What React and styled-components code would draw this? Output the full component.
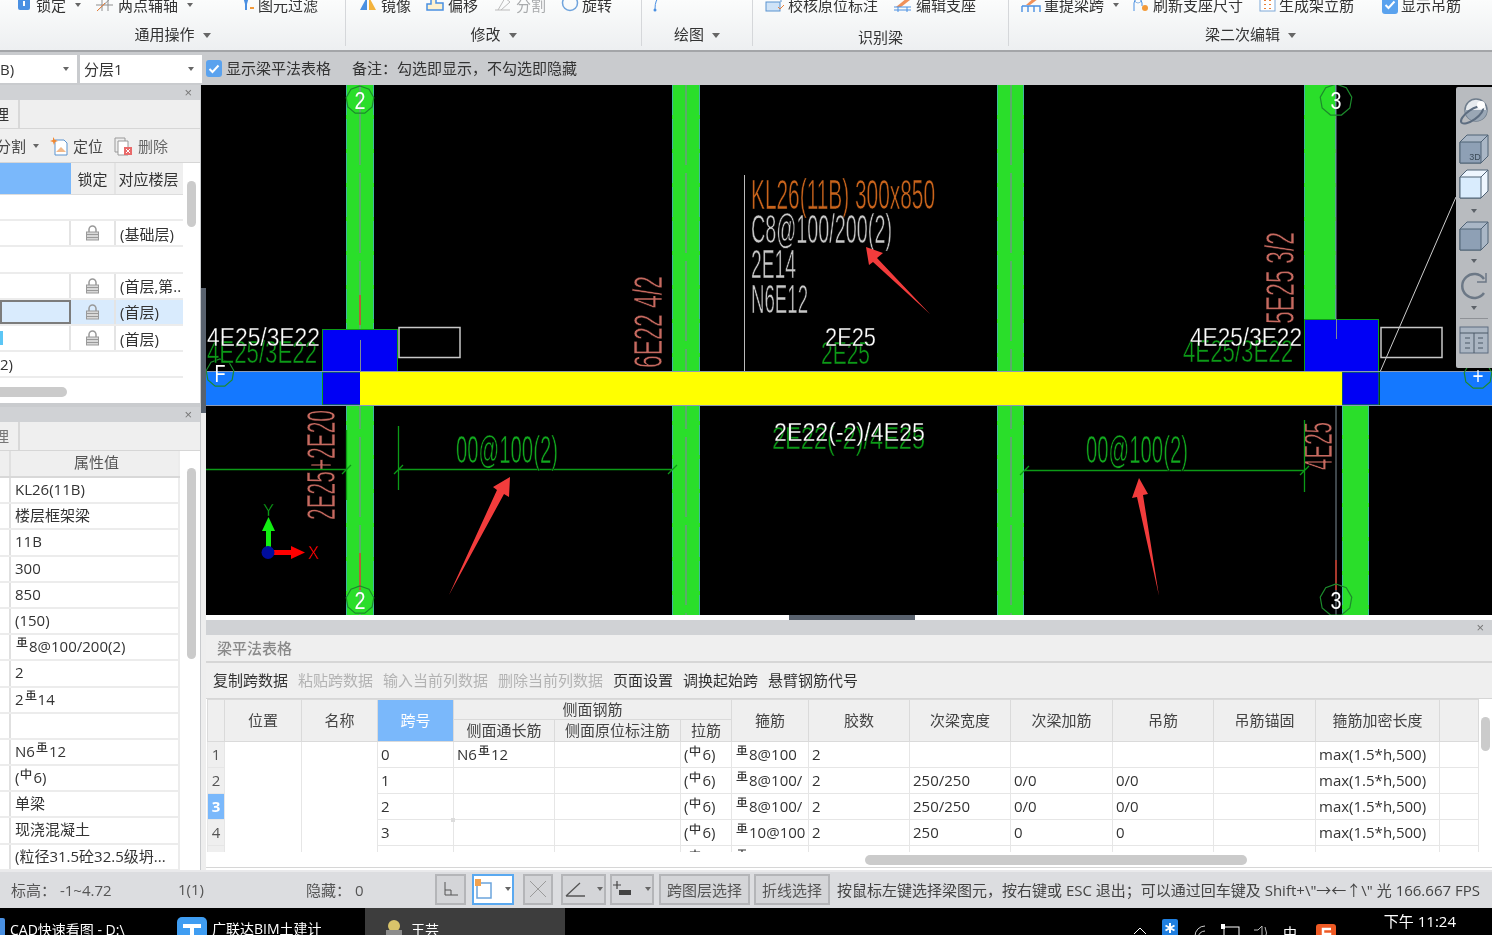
import React from "react";
import styled, { createGlobalStyle } from "styled-components";

const Global = createGlobalStyle`
  html, body { margin: 0; padding: 0; background: #000; }
  * { box-sizing: border-box; }
  body { font-family: "Open Sans", "Noto Sans CJK SC", sans-serif; font-size: 15px; color: #333; }
`;

const Win = styled.div`
  width: 1492px; height: 935px; display: flex; flex-direction: column; overflow: hidden;
  filter: blur(0.4px);
`;

/* ---------- ribbon ---------- */
const Ribbon = styled.div`
  height: 52px; flex: none; display: flex; overflow: hidden;
  background: linear-gradient(#fbfcfc, #edeff1);
  border-bottom: 2px solid #a3a5a8;
`;
const Group = styled.div`
  width: ${p => p.$w}px; flex: ${p => (p.$w ? "none" : 1)}; display: flex; flex-direction: column;
  border-right: ${p => (p.$last ? "none" : "1px solid #d5d7da")}; height: 46px;
`;
const ToolRow = styled.div`
  height: 14px; margin-top: -2px; padding-left: ${p => p.$pad}px; display: flex; align-items: center; overflow: visible;
`;
const Tool = styled.div`
  width: ${p => p.$w}px; flex: none; display: flex; align-items: center; gap: 3px; white-space: nowrap;
  color: ${p => (p.$off ? "#a9abad" : "#333")}; line-height: 14px;
`;
const Caret = styled.i`
  display: inline-block; width: 0; height: 0; margin-left: ${p => p.$ml || 6}px; vertical-align: middle;
  border-left: 3px solid transparent; border-right: 3px solid transparent; border-top: 4px solid #666;
`;
const GroupLabel = styled.div`
  margin-top: ${p => p.$mt || 13}px; text-align: center; line-height: 18px;
  ${Caret} { border-left-width: 4px; border-right-width: 4px; border-top-width: 5px; margin-left: 8px; }
`;

const OptionBar = styled.div`
  height: 33px; flex: none; background: #c9cbce; display: flex; align-items: center;
`;
const Select = styled.div`
  width: ${p => p.$w}px; height: 28px; margin-right: ${p => p.$mr}px; background: #fff; display: flex; align-items: center;
  justify-content: space-between; padding: 0 8px 0 ${p => p.$pl}px; flex: none;
`;
const Check = styled.span`
  width: 16px; height: 17px; border-radius: 3px; background: #5aa2ee; flex: none; display: inline-flex;
  align-items: center; justify-content: center;
`;
const OptionText = styled.span`
  margin-left: ${p => p.$ml}px; margin-top: -3px; white-space: nowrap;
`;

/* ---------- body ---------- */
const Body = styled.div`
  height: 785px; flex: none; display: flex;
`;
const LeftCol = styled.div`
  width: 201px; flex: none; background: #c9cbce; display: flex; flex-direction: column; gap: 4px;
`;
const Splitter = styled.div`
  width: 5px; flex: none; background: #eeeeee; display: flex; flex-direction: column;
`;
const SplitTop = styled.div`
  height: 203px; background: #000;
`;
const SplitHandle = styled.div`
  height: 125px; background: #59626e;
`;
const RightCol = styled.div`
  flex: 1; min-width: 0; display: flex; flex-direction: column; background: #fff;
`;
const Panel = styled.div`
  height: ${p => p.$h}px; flex: none; background: #fff; display: flex; flex-direction: column; position: relative; overflow: hidden;
  border-right: 1px solid #c9cbce;
`;
const PanelHead = styled.div`
  height: 15px; flex: none; background: #d0d2d5; display: flex; align-items: center; justify-content: flex-end; padding-right: 8px;
  color: #777; font: 13px/15px "Liberation Sans", sans-serif;
`;
const TabRow = styled.div`
  height: 29px; flex: none; background: #efefef; display: flex; border-bottom: 1px solid #d6d6d6;
`;
const Tab = styled.div`
  width: 20px; background: #efefef; border-right: 2px solid #d8d8d8; line-height: 28px; overflow: hidden; white-space: nowrap;
  text-indent: -21px; color: ${p => (p.$dim ? "#777" : "#333")};
`;
const PanelTools = styled.div`
  height: 34px; flex: none; background: #efefef; display: flex; align-items: center; border-bottom: 1px solid #d6d6d6; white-space: nowrap;
`;
const PTool = styled.span`
  display: inline-flex; align-items: center; gap: 4px; margin-left: ${p => p.$ml || 0}px; color: ${p => p.$c || "#444"};
`;
const FloorHead = styled.div`
  height: 32px; flex: none; display: flex; width: 183px; background: #efefef; border-bottom: 1px solid #ddd;
`;
const FloorRow = styled.div`
  height: 26.2px; flex: none; display: flex; width: 183px; border-bottom: 2px solid #ececec;
`;
const FloorCell = styled.div`
  width: ${p => p.$w}px; flex: none; display: flex; align-items: center; white-space: nowrap; overflow: hidden;
  justify-content: ${p => (p.$center ? "center" : "flex-start")}; padding-left: ${p => (p.$center ? 0 : 4)}px;
  border-right: 2px solid ${p => (p.$b ? p.$b : "#e4e4e4")};
  background: ${p => p.$bg || "transparent"}; color: ${p => p.$c || "#333"};
  outline: ${p => (p.$focus ? "2px solid #7c7c7c" : "none")}; outline-offset: -2px;
`;
const Track = styled.div`
  position: absolute; left: ${p => p.$x}px; top: ${p => p.$y}px; width: ${p => p.$w}px; height: ${p => p.$h}px;
  background: #cbcbcb; border-radius: 5px;
`;
const PropHead = styled.div`
  height: 27px; flex: none; display: flex; width: 180px; background: #efefef; border-bottom: 2px solid #d8d8d8;
`;
const PropRow = styled.div`
  height: 26.2px; flex: none; display: flex; width: 180px; border-bottom: 2px solid #ececec;
`;
const PropIdx = styled.div`
  width: 11px; flex: none; border-right: 2px solid #e0e0e0;
`;
const PropVal = styled.div`
  flex: 1; padding-left: 4px; line-height: 22px; white-space: nowrap; overflow: hidden; border-right: 2px solid #ececec;
  text-align: ${p => (p.$center ? "center" : "left")}; color: ${p => p.$c || "#333"};
`;

/* ---------- canvas ---------- */
const Canvas = styled.div`
  height: 530px; flex: none; background: #000; position: relative; overflow: hidden;
  svg.cad { display: block; }
  svg.cad text { font-family: "Liberation Sans", sans-serif; }
`;
const ViewBar = styled.div`
  position: absolute; right: 0; top: 2px; width: 36px; height: 281px; background: #b8bbbf; border-radius: 2px 0 0 2px;
  display: flex; flex-direction: column; align-items: center; padding-top: 6px;
`;
const ViewIcon = styled.div`
  height: ${p => p.$h}px; flex: none; display: flex; align-items: center; justify-content: center;
`;
const ViewCaret = styled(Caret)`
  margin: 0; border-top-color: #5c6168;
`;
const ViewRule = styled.div`
  width: 28px; height: 1px; background: #8e9196; margin: 3px 0 2px;
`;
const SplitBar = styled.div`
  height: 5px; flex: none; background: #fff; padding-left: 583px;
`;
const SplitGrip = styled.div`
  width: 126px; height: 5px; background: #59626e;
`;

/* ---------- beam table ---------- */
const TablePanel = styled.div`
  flex: 1; display: flex; flex-direction: column; background: #fff; position: relative;
`;
const TableTitle = styled.div`
  height: 28px; flex: none; background: #efefef; border-bottom: 2px solid #d6d6d6; color: #8a8a8a; padding-left: 11px; line-height: 26px; font-weight: 500;
`;
const TableTools = styled.div`
  height: 36px; flex: none; background: #efefef; border-bottom: 1px solid #d6d6d6; padding-left: 7px; padding-bottom: 2px; display: flex; gap: 10px; align-items: center;
`;
const TableTool = styled.span`
  color: ${p => (p.$off ? "#b3b3b3" : "#333")}; white-space: nowrap;
`;
const TableClip = styled.div`
  height: 153px; flex: none; overflow: hidden; padding-left: 1px; position: relative;
`;
const Grid = styled.table`
  width: 1271px; table-layout: fixed; border-collapse: collapse; font-size: 15px;
`;
const Th = styled.th`
  height: ${p => p.$h || 20}px; font-weight: 400; padding: 0 0 1px; white-space: nowrap; overflow: hidden; text-align: center;
  background: ${p => (p.$active ? "#7ab8fb" : "#efefef")}; color: ${p => (p.$active ? "#fff" : "#444")};
  border: 1.5px solid #dadada; line-height: 18px;
`;
const Td = styled.td`
  height: 26px; padding: 0 0 2px 3px; white-space: nowrap; overflow: hidden; border: 1.5px solid #e6e6e6; line-height: 22px; color: #333;
  background: #fff;
`;
const RowNo = styled(Td)`
  background: ${p => (p.$active ? "#7ab8fb" : "#efefef")}; color: ${p => (p.$active ? "#fff" : "#555")}; text-align: center; padding: 0 0 2px;
  font-weight: ${p => (p.$active ? 700 : 400)};
`;
const FocusMark = styled.span`
  position: absolute; left: 245px; top: 119px; width: 4px; height: 4px; background: #dcdcdc;
`;
const HScroll = styled.div`
  height: 16px; flex: none; background: #fff; border-bottom: 1px solid #d6d6d6; position: relative;
`;
const CloseX = styled.span`
  color: #777; font: 13px/15px "Liberation Sans", sans-serif;
`;

/* ---------- status + taskbar ---------- */
const Status = styled.div`
  height: 38px; flex: none; background: #dcdde0; display: flex; align-items: center; padding-left: 11px; padding-bottom: 2px; color: #555; white-space: nowrap; border-top: 2px solid #e9e9eb;
`;
const StatusText = styled.span`
  width: ${p => p.$w}px; flex: none; margin-left: ${p => p.$ml || 0}px; ${p => p.$c && `color: ${p.$c};`}
`;
const StatusBtn = styled.div`
  width: ${p => p.$w}px; height: 31px; margin-left: ${p => p.$ml}px; flex: none; display: flex; align-items: center; justify-content: center; gap: 6px;
  background: ${p => (p.$on ? "#fff" : "#d4d5d8")}; border: 2px solid ${p => (p.$on ? "#5aa9f0" : "#b4b5b8")}; color: #555;
`;
const Taskbar = styled.div`
  height: 27px; flex: none; background: #000; color: #fff; display: flex; overflow: hidden; position: relative; font-size: 14px;
`;
const TaskItem = styled.div`
  width: ${p => p.$w}px; flex: none; height: 27px; display: flex; gap: 5px; padding-top: ${p => p.$pt || 12}px; padding-left: ${p => p.$pl || 0}px;
  margin-left: ${p => p.$ml || 0}px; background: ${p => p.$bg || "transparent"}; white-space: nowrap; line-height: 20px;
  svg { margin-top: -2px; flex: none; }
`;
const Tray = styled.div`
  flex: 1; display: flex; align-items: flex-start; position: relative; padding-top: 11px;
`;
const TrayGlyph = styled.div`
  width: ${p => p.$w}px; margin-left: ${p => p.$ml}px; margin-top: ${p => p.$mt || 0}px; flex: none; line-height: 20px;
  svg { display: block; }
`;
const Clock = styled.div`
  position: absolute; right: 36px; top: 3px; font-size: 15px; line-height: 20px;
`;

/* ---------- rebar marks and icons ---------- */
const Steel = ({ kind }) => (
  <svg width="12" height="12" viewBox="0 0 12 12" style={{ verticalAlign: "3px", margin: "0 1px" }}>
    {kind === "E"
      ? <path d="M2 1h8M2.5 3.5h7v3.5h-7zM6 1v8.5M0.5 9.5h11" fill="none" stroke="#333" strokeWidth="1.2" />
      : <path d="M1.5 3h9v4.5h-9zM6 0.5v11" fill="none" stroke="#333" strokeWidth="1.2" />}
  </svg>
);
const Ic = ({ w = 18, h = 16, children, style }) => (
  <svg width={w} height={h} viewBox={`0 0 ${w} ${h}`} style={{ flex: "none", ...style }}>{children}</svg>
);
const Lock = () => (
  <Ic w={15} h={16}>
    <path d="M4 7V4.5a3.5 3.5 0 0 1 7 0V7" fill="none" stroke="#999" strokeWidth="1.5" />
    <rect x="1.5" y="7" width="12" height="8" fill="#d8d8d8" stroke="#999" />
    <path d="M2 9.5h11M2 12.5h11" stroke="#999" />
  </Ic>
);

const ribbonIcons = {
  lock: <Ic w={16}><rect x="1" y="0" width="12" height="13" rx="2" fill="#4a90e2" /><rect x="6" y="4" width="2" height="5" fill="#fff" /></Ic>,
  axis: <Ic w={19}><path d="M1 14L15 1M6 0v14M12 0v14M0 8h17" stroke="#8f8f8f" fill="none" /><path d="M1 14L9 6" stroke="#e8803a" /></Ic>,
  filter: <Ic w={15}><path d="M3 0h6L7 7v6H5V7z" fill="#4a90e2" /><rect x="10" y="10" width="4" height="2" fill="#f29a3a" /></Ic>,
  mirror: <Ic w={20}><path d="M9 0L2 13h7z" fill="#4a90e2" /><path d="M11 0l7 13h-7z" fill="#f3b33d" /></Ic>,
  offset: <Ic w={20}><path d="M6 1h5v5h7v7H2V7h4z" fill="#fdf1cf" stroke="#4a90e2" strokeWidth="1.5" /></Ic>,
  split: <Ic w={20}><path d="M2 13h15M5 13L12 1l5 4-9 8" stroke="#bbb" fill="none" /></Ic>,
  rotate: <Ic w={18}><circle cx="9" cy="6" r="7.5" fill="none" stroke="#6fa3dc" strokeWidth="1.5" /></Ic>,
  draw: <Ic w={10}><path d="M8 0Q3 2 3 12" stroke="#4a90e2" fill="none" /><circle cx="3" cy="13" r="1.5" fill="#4a90e2" /></Ic>,
  check: <Ic w={20}><rect x="1" y="5" width="14" height="9" fill="#cfe3f7" stroke="#5b93cf" /><path d="M6 0h10v5" fill="none" stroke="#5b93cf" /><path d="M13 10l2 2 4-4" stroke="#e8803a" fill="none" /></Ic>,
  seat: <Ic w={20}><path d="M3 10L14 1l3 2-9 7" fill="#f0915a" /><path d="M1 10h17M1 13h17M5 10v5M14 10v5" stroke="#4a90e2" fill="none" /></Ic>,
  span: <Ic w={20}><path d="M5 8L14 0l3 2-8 6" fill="#f0915a" /><path d="M1 9h18v6M1 9v6M7 9v6M13 9v6" stroke="#4a90e2" fill="none" strokeWidth="1.4" /></Ic>,
  refresh: <Ic w={19}><path d="M3 14V6a4 4 0 0 1 8 0v3" stroke="#4a90e2" fill="none" /><circle cx="7" cy="3" r="3" fill="none" stroke="#8fb8e6" /><circle cx="14" cy="11" r="3" fill="#f29a3a" /></Ic>,
  bars: <Ic w={17}><rect x="1" y="0" width="15" height="14" fill="#fff" stroke="#7fa9d8" /><path d="M6 3v1M11 3v1M6 7v1M11 7v1M6 11v1M11 11v1" stroke="#e8803a" strokeWidth="2" /></Ic>,
};

const CheckMark = () => (
  <svg width="12" height="10" viewBox="0 0 12 10"><path d="M1.5 5l3 3 6-6.5" fill="none" stroke="#fff" strokeWidth="2" /></svg>
);

/* ---------- cad drawing ---------- */
const Hept = ({ cx, cy, r = 14, label, c = "#1c8a2c" }) => {
  const pts = Array.from({ length: 9 }, (_, i) => {
    const a = (i / 9) * Math.PI * 2 - Math.PI / 2;
    return `${cx + r * Math.cos(a)},${cy + r * Math.sin(a)}`;
  }).join(" ");
  return (
    <g>
      <polygon points={pts} fill="none" stroke={c} strokeWidth="1.2" />
      <text x={cx} y={cy + 9} textAnchor="middle" fontSize="24" fill="#fff" textLength="11" lengthAdjust="spacingAndGlyphs">{label}</text>
    </g>
  );
};
// thin = black stroke eats the filled glyph so it reads like a single-line CAD font
const T = ({ x, y, w, size, c, rot, thin = 0.7, children }) => (
  <text x={x} y={y} fontSize={size} fill={c} stroke="#000" strokeWidth={thin} textLength={w} lengthAdjust="spacingAndGlyphs"
    transform={rot ? `rotate(-90 ${x} ${y})` : undefined}>{children}</text>
);
const RedArrow = ({ points }) => <polygon points={points} fill="#f23c3c" />;

const GREEN = "#2ade2a", DIM = "#0c9a17", SALMON = "#c76a60", LINE = "#7d8c96";

const Column = ({ x, w, y = 85, h = 530, line }) => (
  <g>
    <rect x={x} y={y} width={w} height={h} fill={GREEN} />
    <path d={`M${x + .5} ${y}v${h}M${x + w - .5} ${y}v${h}`} stroke="#3fb9a0" strokeDasharray="30 4" />
    {line && <line x1={line} x2={line} y1={y} y2={y + h} stroke={LINE} strokeWidth="1.2" strokeDasharray="80 8" />}
  </g>
);

const CadDrawing = () => (
  <svg className="cad" width="1286" height="530" viewBox="206 85 1286 530">
    <Column x={346} w={28} line={360} />
    <Column x={672} w={28} line={686} />
    <Column x={997} w={27} line={1011} />
    <Column x={1304} w={32} h={240} />
    <Column x={1342} w={27} y={405} h={210} />
    <line x1="1336" x2="1336" y1="85" y2="615" stroke={LINE} />
    <path d="M360 295v30M360 553v37M1336 560v30" stroke="#f0301a" strokeWidth="1.2" />

    <line x1="744.5" x2="744.5" y1="175" y2="372" stroke="#bbb" />
    <line x1="1380" y1="372" x2="1456" y2="197" stroke="#ccc" />

    <rect x="206" y="372" width="116" height="33" fill="#1478ff" />
    <rect x="1380" y="372" width="112" height="33" fill="#1478ff" />
    <rect x="322.5" y="329.5" width="75" height="43" fill="#0000f5" stroke="#0c9a17" />
    <rect x="322.5" y="372" width="38" height="33" fill="#0000f5" stroke="#0c9a17" />
    <rect x="1304.5" y="319.5" width="74" height="53" fill="#0000f5" stroke="#0c9a17" />
    <rect x="1342" y="372" width="37" height="33" fill="#0000f5" stroke="#0c9a17" />
    <rect x="360" y="372" width="982" height="33" fill="#ffff00" />
    <path d="M206 371.5H1492M206 405.5H1492" stroke="#8d9bb5" />
    <path d="M360.5 340v32M1336.5 319v20" stroke={LINE} />
    <rect x="399" y="327.5" width="61" height="30" fill="none" stroke="#c8c8c8" strokeWidth="1.5" />
    <rect x="1381" y="327.5" width="61" height="30" fill="none" stroke="#c8c8c8" strokeWidth="1.5" />

    <Hept cx={360} cy={100} label="2" />
    <Hept cx={360} cy={600} label="2" />
    <Hept cx={1336} cy={100} r={16} label="3" />
    <Hept cx={1336} cy={600} r={16} label="3" />
    <Hept cx={220} cy={373} label="F" />
    <Hept cx={1478} cy={375} label="+" />

    <T x={751} y={209} w={184} size={42} c="#c9641c">KL26(11B) 300x850</T>
    <T x={751} y={243} w={141} size={40} c="#c8c8c8">C8@100/200(2)</T>
    <T x={751} y={278} w={45} size={40} c="#c8c8c8">2E14</T>
    <T x={751} y={313} w={57} size={40} c="#c8c8c8">N6E12</T>

    <T x={821} y={364} w={49} size={32} c={DIM} thin={0.5}>2E25</T>
    <T x={825} y={346} w={51} size={25} c="#fff" thin={0.3}>2E25</T>
    <T x={207} y={363} w={110} size={32} c={DIM} thin={0.5}>4E25/3E22</T>
    <T x={207} y={346} w={113} size={25} c="#fff" thin={0.3}>4E25/3E22</T>
    <T x={1183} y={362} w={110} size={32} c={DIM} thin={0.5}>4E25/3E22</T>
    <T x={1190} y={346} w={112} size={25} c="#fff" thin={0.3}>4E25/3E22</T>
    <T x={772} y={449} w={153} size={32} c={DIM} thin={0.5}>2E22(-2)/4E25</T>
    <T x={774} y={441} w={151} size={25} c="#fff" thin={0.3}>2E22(-2)/4E25</T>

    <T x={662} y={368} w={92} size={40} c={SALMON} rot>6E22 4/2</T>
    <T x={335} y={520} w={110} size={40} c={SALMON} rot>2E25+2E20</T>
    <T x={1294} y={324} w={92} size={40} c={SALMON} rot>5E25 3/2</T>
    <T x={1332} y={470} w={48} size={40} c={SALMON} rot>4E25</T>

    <path d="M206 469.5H347M398 469.5H672M398.5 426v64M394 474l9-9M342 474l9-9M668 474l9-9" stroke={DIM} strokeWidth="1.3" fill="none" />
    <path d="M1024 470.5H1304M1304.5 420v72M1020 475l9-9M1300 475l9-9M346.5 430v70" stroke={DIM} strokeWidth="1.3" fill="none" />
    <T x={456} y={463} w={102} size={38} c="#12a81e">00@100(2)</T>
    <T x={1086} y={463} w={102} size={38} c="#12a81e">00@100(2)</T>

    <T x={263} y={516} w={11} size={17} c={DIM} thin={0.3}>Y</T>
    <T x={308} y={559} w={11} size={18} c="#f00" thin={0.3}>X</T>
    <rect x="266" y="530" width="5" height="22" fill="#12ee12" />
    <polygon points="268.5,517 275,531 262,531" fill="#12ee12" />
    <rect x="268" y="550" width="24" height="5" fill="#f00" />
    <polygon points="305,552.5 291,546 291,559" fill="#f00" />
    <circle cx="268" cy="552.5" r="6.5" fill="#000d9e" />

    <RedArrow points="510,477 509,497 504,494 449,595 497,490 493,487" />
    <RedArrow points="1139,478 1148,494 1143,495 1159,596 1137,497 1132,498" />
    <RedArrow points="866,247 883,253 877,258 930,314 873,262 869,265" />
  </svg>
);

const Cube = ({ fill = "#8ea0b5", face = "#aab7c6", label }) => (
  <svg width="30" height="30" viewBox="0 0 30 30">
    <path d="M1 8l7-7h21v21l-7 7H1z" fill={face} stroke="#4f6275" />
    <path d="M1 8h21v21H1zM22 8l7-7" fill={fill} stroke="#4f6275" />
    {label && <text x="16" y="26" fontSize="9" fill="#3c4a58" textAnchor="middle" fontFamily="Liberation Sans, sans-serif">{label}</text>}
  </svg>
);

const floors = [
  { key: "a" },
  { key: "b", label: "(基础层)", lock: true },
  { key: "c" },
  { key: "d", label: "(首层,第..", lock: true },
  { key: "e", label: "(首层)", lock: true, sel: true },
  { key: "f", label: "(首层)", lock: true, mark: true },
  { key: "g", first: "2)" },
];

const props = [
  "KL26(11B)", "楼层框架梁", "11B", "300", "850", "(150)",
  <><Steel kind="E" />8@100/200(2)</>, "2", <>2<Steel kind="E" />14</>, "",
  <>N6<Steel kind="E" />12</>, <>(<Steel kind="A" />6)</>, "单梁", "现浇混凝土", "(粒径31.5砼32.5级坍...",
];

const colWidths = [17, 77, 76, 76, 101, 126, 51, 77, 101, 101, 102, 101, 102, 124, 39];

const beamRows = [
  { no: 1, span: "0", side: <>N6<Steel kind="E" />12</>, stir: "8@100", w: "", a: "", h: "" },
  { no: 2, span: "1", side: "", stir: "8@100/", w: "250/250", a: "0/0", h: "0/0" },
  { no: 3, span: "2", side: "", stir: "8@100/", w: "250/250", a: "0/0", h: "0/0", active: true },
  { no: 4, span: "3", side: "", stir: "10@100", w: "250", a: "0", h: "0" },
  { no: 5, span: "", side: "", stir: "8@100", w: "", a: "", h: "" },
];

export default function App() {
  return (
    <Win>
      <Global />
      <Ribbon>
        <Group $w={346}>
          <ToolRow $pad={17}>
            <Tool $w={79}>{ribbonIcons.lock}锁定<Caret /></Tool>
            <Tool $w={144}>{ribbonIcons.axis}两点辅轴<Caret /></Tool>
            <Tool>{ribbonIcons.filter}图元过滤</Tool>
          </ToolRow>
          <GroupLabel>通用操作<Caret /></GroupLabel>
        </Group>
        <Group $w={296}>
          <ToolRow $pad={12}>
            <Tool $w={67}>{ribbonIcons.mirror}镜像</Tool>
            <Tool $w={68}>{ribbonIcons.offset}偏移</Tool>
            <Tool $w={68} $off>{ribbonIcons.split}分割</Tool>
            <Tool>{ribbonIcons.rotate}旋转</Tool>
          </ToolRow>
          <GroupLabel>修改<Caret /></GroupLabel>
        </Group>
        <Group $w={111}>
          <ToolRow $pad={10}><Tool>{ribbonIcons.draw}</Tool></ToolRow>
          <GroupLabel>绘图<Caret /></GroupLabel>
        </Group>
        <Group $w={256}>
          <ToolRow $pad={12}>
            <Tool $w={128}>{ribbonIcons.check}校核原位标注</Tool>
            <Tool>{ribbonIcons.seat}编辑支座</Tool>
          </ToolRow>
          <GroupLabel $mt={16}>识别梁</GroupLabel>
        </Group>
        <Group $last>
          <ToolRow $pad={12}>
            <Tool $w={110}>{ribbonIcons.span}重提梁跨<Caret /></Tool>
            <Tool $w={128}>{ribbonIcons.refresh}刷新支座尺寸</Tool>
            <Tool $w={123}>{ribbonIcons.bars}生成架立筋</Tool>
            <Tool><Check><CheckMark /></Check>显示吊筋</Tool>
          </ToolRow>
          <GroupLabel>梁二次编辑<Caret /></GroupLabel>
        </Group>
      </Ribbon>

      <OptionBar>
        <Select $w={77} $mr={3} $pl={0}>B)<Caret /></Select>
        <Select $w={122} $mr={4} $pl={4}>分层1<Caret /></Select>
        <Check><CheckMark /></Check>
        <OptionText $ml={4}>显示梁平法表格</OptionText>
        <OptionText $ml={21}>{"备注\uFF1A勾选即显示\uFF0C不勾选即隐藏"}</OptionText>
      </OptionBar>

      <Body>
        <LeftCol>
          <Panel $h={318}>
            <PanelHead>×</PanelHead>
            <TabRow><Tab>管理</Tab></TabRow>
            <PanelTools>
              <PTool style={{ marginLeft: -4 }}>分割<Caret $ml={3} /></PTool>
              <PTool $ml={10}>
                <Ic w={20} h={20}><path d="M6 4h9l3 3v12H6z" fill="#fff" stroke="#5b93cf" /><path d="M7 16l5-5 5 5z" fill="#f2b98a" /><path d="M4 1l2 3 3 1-3 1-1 3-1-3-3-1 3-1z" fill="#f2862e" /></Ic>
                定位
              </PTool>
              <PTool $ml={11} $c="#666">
                <Ic w={20} h={20}><path d="M1 2h10v14H1z" fill="#eee" stroke="#999" /><path d="M4 5h10v14H4z" fill="#fff" stroke="#999" /><rect x="10" y="11" width="8" height="8" fill="#e96a6a" /><path d="M12 13l4 4M16 13l-4 4" stroke="#fff" /></Ic>
                删除
              </PTool>
            </PanelTools>
            <FloorHead>
              <FloorCell $w={71} $bg="#7ab8fb" $b="#7ab8fb" />
              <FloorCell $w={45} $center>锁定</FloorCell>
              <FloorCell $w={67} $center $b="transparent">对应楼层</FloorCell>
            </FloorHead>
            {floors.map(f => (
              <FloorRow key={f.key}>
                <FloorCell $w={71} $focus={f.sel} $bg={f.sel ? "#d9ebfd" : undefined} $b={f.lock ? "#e4e4e4" : "transparent"}>
                  {f.mark && <span style={{ width: 3, height: 14, background: "#5cc6f5", marginLeft: -4 }} />}
                  {f.first && <span style={{ marginLeft: -4 }}>{f.first}</span>}
                </FloorCell>
                <FloorCell $w={45} $center $bg={f.sel ? "#d9ebfd" : undefined} $b={f.lock ? "#e4e4e4" : "transparent"}>{f.lock && <Lock />}</FloorCell>
                <FloorCell $w={67} $b="transparent" $bg={f.sel ? "#d9ebfd" : undefined}>{f.label}</FloorCell>
              </FloorRow>
            ))}
            <Track $x={-10} $y={302} $w={77} $h={10} />
            <Track $x={187} $y={96} $w={9} $h={46} />
          </Panel>
          <Panel $h={463}>
            <PanelHead>×</PanelHead>
            <TabRow><Tab $dim>管理</Tab></TabRow>
            <PropHead>
              <PropIdx />
              <PropVal $center $c="#555">属性值</PropVal>
            </PropHead>
            {props.map((v, i) => (
              <PropRow key={i}>
                <PropIdx />
                <PropVal>{v}</PropVal>
              </PropRow>
            ))}
            <Track $x={187} $y={61} $w={9} $h={191} />
          </Panel>
        </LeftCol>
        <Splitter><SplitTop /><SplitHandle /></Splitter>
        <RightCol>
          <Canvas>
            <CadDrawing />
            <ViewBar>
              <ViewIcon $h={38}>
                <svg width="32" height="28" viewBox="0 0 32 28">
                  <circle cx="18" cy="12" r="11" fill="#e6eaee" stroke="#6f7d8c" strokeWidth="1.5" />
                  <path d="M7 12a11 11 0 0 0 22 0z" fill="#9aa7b5" />
                  <ellipse cx="14" cy="17" rx="13" ry="5" transform="rotate(-35 14 17)" fill="none" stroke="#5d6d80" strokeWidth="2" />
                  <circle cx="23" cy="7" r="4" fill="#fff" />
                </svg>
              </ViewIcon>
              <ViewIcon $h={36}><Cube label="3D" /></ViewIcon>
              <ViewIcon $h={34}><Cube fill="#d9ecfd" face="#eef6fe" /></ViewIcon>
              <ViewIcon $h={20}><ViewCaret /></ViewIcon>
              <ViewIcon $h={30}><Cube /></ViewIcon>
              <ViewIcon $h={20}><ViewCaret /></ViewIcon>
              <ViewIcon $h={30}>
                <svg width="30" height="30" viewBox="0 0 30 30">
                  <path d="M25 8A12 12 0 1 0 25 22" fill="none" stroke="#6c7886" strokeWidth="2.5" />
                  <path d="M27 2v9h-9" fill="none" stroke="#6c7886" strokeWidth="1.5" />
                </svg>
              </ViewIcon>
              <ViewIcon $h={14}><ViewCaret /></ViewIcon>
              <ViewRule />
              <ViewIcon $h={38}>
                <svg width="30" height="28" viewBox="0 0 30 28">
                  <rect x="1" y="1" width="28" height="26" fill="#aab5c2" stroke="#5d6d80" />
                  <path d="M1 7h28M15 7v20M6 12h5M6 17h5M6 22h5M19 12h5M19 17h5M19 22h5" stroke="#4a5866" />
                </svg>
              </ViewIcon>
            </ViewBar>
          </Canvas>
          <SplitBar><SplitGrip /></SplitBar>
          <TablePanel>
            <PanelHead><CloseX>×</CloseX></PanelHead>
            <TableTitle>梁平法表格</TableTitle>
            <TableTools>
              <TableTool>复制跨数据</TableTool>
              <TableTool $off>粘贴跨数据</TableTool>
              <TableTool $off>输入当前列数据</TableTool>
              <TableTool $off>删除当前列数据</TableTool>
              <TableTool>页面设置</TableTool>
              <TableTool>调换起始跨</TableTool>
              <TableTool>悬臂钢筋代号</TableTool>
            </TableTools>
            <TableClip>
              <Grid>
                <colgroup>{colWidths.map((w, i) => <col key={i} style={{ width: w }} />)}</colgroup>
                <thead>
                  <tr>
                    <Th rowSpan={2} />
                    <Th rowSpan={2}>位置</Th>
                    <Th rowSpan={2}>名称</Th>
                    <Th rowSpan={2} $active>跨号</Th>
                    <Th colSpan={3} $h={20}>侧面钢筋</Th>
                    <Th rowSpan={2}>箍筋</Th>
                    <Th rowSpan={2}>胶数</Th>
                    <Th rowSpan={2}>次梁宽度</Th>
                    <Th rowSpan={2}>次梁加筋</Th>
                    <Th rowSpan={2}>吊筋</Th>
                    <Th rowSpan={2}>吊筋锚固</Th>
                    <Th rowSpan={2}>箍筋加密长度</Th>
                    <Th rowSpan={2} />
                  </tr>
                  <tr>
                    <Th $h={22}>侧面通长筋</Th>
                    <Th $h={22}>侧面原位标注筋</Th>
                    <Th $h={22}>拉筋</Th>
                  </tr>
                </thead>
                <tbody>
                  {beamRows.map((r, i) => (
                    <tr key={r.no}>
                      <RowNo $active={r.active}>{r.no}</RowNo>
                      {i === 0 && <Td rowSpan={5} />}
                      {i === 0 && <Td rowSpan={5} />}
                      <Td>{r.span}</Td>
                      <Td>{r.side}</Td>
                      <Td />
                      <Td>(<Steel kind="A" />6)</Td>
                      <Td><Steel kind="E" />{r.stir}</Td>
                      <Td>2</Td>
                      <Td>{r.w}</Td>
                      <Td>{r.a}</Td>
                      <Td>{r.h}</Td>
                      <Td />
                      <Td>max(1.5*h,500)</Td>
                      <Td />
                    </tr>
                  ))}
                </tbody>
              </Grid>
              <FocusMark />
              <Track $x={1275} $y={18} $w={9} $h={34} />
            </TableClip>
            <HScroll><Track $x={659} $y={3} $w={382} $h={10} /></HScroll>
          </TablePanel>
        </RightCol>
      </Body>

      <Status>
        <StatusText $w={167}>{"标高\uFF1A -1~4.72"}</StatusText>
        <StatusText $w={128}>1(1)</StatusText>
        <StatusText $w={129}>{"隐藏\uFF1A 0"}</StatusText>
        <StatusBtn $w={31} $ml={0}>
          <Ic w={16} h={16}><path d="M2 1v13h13M2 9h6v5" fill="none" stroke="#555" /></Ic>
        </StatusBtn>
        <StatusBtn $w={42} $ml={6} $on>
          <Ic w={18} h={20}><rect x="2" y="4" width="14" height="15" fill="#fff" stroke="#6ba4dc" strokeWidth="1.5" /><rect x="0" y="0" width="6" height="7" fill="#f2a24e" /></Ic>
          <Caret $ml={0} />
        </StatusBtn>
        <StatusBtn $w={30} $ml={9}>
          <Ic w={20} h={20}><path d="M2 2l16 16M18 2L2 18" stroke="#9a9a9a" /></Ic>
        </StatusBtn>
        <StatusBtn $w={45} $ml={8}>
          <Ic w={20} h={18}><path d="M1 16h19M1 16L15 3" stroke="#555" fill="none" strokeWidth="1.3" /></Ic>
          <Caret $ml={0} />
        </StatusBtn>
        <StatusBtn $w={44} $ml={4}>
          <Ic w={20} h={18}><path d="M4 1v8M0 5h8" stroke="#444" strokeWidth="1.2" /><rect x="6" y="10" width="12" height="5" fill="#444" /></Ic>
          <Caret $ml={0} />
        </StatusBtn>
        <StatusBtn $w={91} $ml={5}>跨图层选择</StatusBtn>
        <StatusBtn $w={76} $ml={4}>折线选择</StatusBtn>
        <StatusText $w={650} $ml={7} $c="#444">{"按鼠标左键选择梁图元\uFF0C按右键或 ESC 退出\uFF1B可以通过回车键及 Shift+\\\"→←↑\\\" 光 166.667 FPS"}</StatusText>
      </Status>

      <Taskbar>
        <TaskItem $w={184} $ml={-7}>
          <svg width="12" height="20" viewBox="0 0 12 20"><rect width="12" height="20" rx="2" fill="#4a90e2" /></svg>
          CAD快速看图 - D:\
        </TaskItem>
        <TaskItem $w={188} $pt={11}>
          <svg width="30" height="30" viewBox="0 0 30 30"><rect width="30" height="30" rx="5" fill="#3f9df2" /><path d="M6 7h18v4h-7v13h-4V11H6z" fill="#fff" /></svg>
          广联达BIM土建计
        </TaskItem>
        <TaskItem $w={200} $pl={15} $bg="#3d3d3d">
          <svg width="26" height="26" viewBox="0 0 26 26"><circle cx="14" cy="8" r="6" fill="#d9c46a" /><rect x="6" y="12" width="16" height="14" fill="#8c8c8c" /></svg>
          王芸
        </TaskItem>
        <Tray>
          <TrayGlyph $w={14} $ml={568} $mt={6}>
            <svg width="14" height="14" viewBox="0 0 14 14"><path d="M1 9l6-6 6 6" fill="none" stroke="#fff" /></svg>
          </TrayGlyph>
          <TrayGlyph $w={16} $ml={15}>
            <svg width="16" height="20" viewBox="0 0 16 20"><rect width="16" height="20" rx="2" fill="#1f7fe0" /><path d="M8 4v10M3.5 6.5l9 5M12.5 6.5l-9 5" stroke="#fff" strokeWidth="2" /></svg>
          </TrayGlyph>
          <TrayGlyph $w={18} $ml={15} $mt={5}>
            <svg width="18" height="18" viewBox="0 0 18 18"><path d="M2 12a10 10 0 0 1 10-10M5 14a7 7 0 0 1 7-7" fill="none" stroke="#ccc" /></svg>
          </TrayGlyph>
          <TrayGlyph $w={22} $ml={8} $mt={4}>
            <svg width="22" height="18" viewBox="0 0 22 18"><rect x="5" y="4" width="15" height="12" fill="none" stroke="#fff" /><rect x="2" y="1" width="4" height="5" fill="#fff" /></svg>
          </TrayGlyph>
          <TrayGlyph $w={18} $ml={11} $mt={4}>
            <svg width="18" height="18" viewBox="0 0 18 18"><path d="M2 7h4l4-4v14M13 4q3 6 0 12" fill="none" stroke="#bbb" /></svg>
          </TrayGlyph>
          <TrayGlyph $w={15} $ml={13} $mt={4}>中</TrayGlyph>
          <TrayGlyph $w={20} $ml={18} $mt={5}>
            <svg width="20" height="20" viewBox="0 0 20 20"><rect width="20" height="20" rx="3" fill="#ef5a24" /><path d="M15 5H7v5h7v5H5" fill="none" stroke="#fff" strokeWidth="2.5" /></svg>
          </TrayGlyph>
          <Clock>下午 11:24</Clock>
        </Tray>
      </Taskbar>
    </Win>
  );
}
